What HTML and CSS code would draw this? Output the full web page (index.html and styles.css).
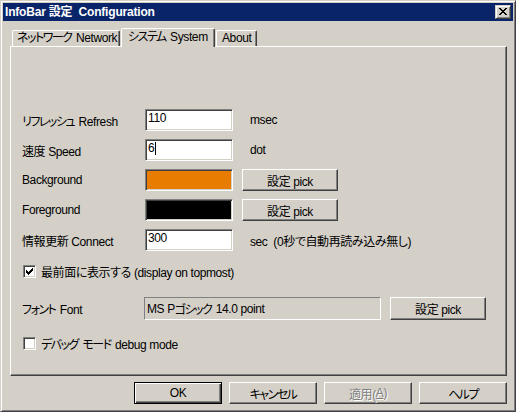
FILE: index.html
```html
<!DOCTYPE html>
<html lang="ja">
<head>
<meta charset="utf-8">
<title>InfoBar 設定 Configuration</title>
<link rel="stylesheet" href="styles.css">
</head>
<body>
<div class="window">
  <div class="titlebar">
    <span class="title">InfoBar 設定&nbsp; Configuration</span>
    <span class="close">
      <svg width="8" height="7" viewBox="0 0 8 7" shape-rendering="crispEdges"><path fill="#000" d="M0 0h2v1H0z M6 0h2v1H6z M1 1h2v1H1z M5 1h2v1H5z M2 2h4v1H2z M3 3h2v1H3z M2 4h4v1H2z M1 5h2v1H1z M5 5h2v1H5z M0 6h2v1H0z M6 6h2v1H6z"/></svg>
    </span>
  </div>
  <div class="body">
    <div class="tabs">
      <div class="tab tab-net"><span class="kn">ネットワーク</span> Network</div>
      <div class="tab tab-sys active"><span class="kn">システム</span> System</div>
      <div class="tab tab-about">About</div>
    </div>
    <div class="panel">
      <div class="form">
        <span class="label"><span class="kn">リフレッシュ</span> Refresh</span>
        <span class="edit">110</span>
        <span class="unit">msec</span>

        <span class="label">速度 Speed</span>
        <span class="edit">6<span class="caret"></span></span>
        <span class="unit">dot</span>

        <span class="label">Background</span>
        <span class="swatch swatch-orange"></span>
        <span class="btn pick">設定 pick</span>

        <span class="label">Foreground</span>
        <span class="swatch swatch-black"></span>
        <span class="btn pick">設定 pick</span>

        <span class="label">情報更新 Connect</span>
        <span class="edit">300</span>
        <span class="unit">sec&nbsp; (0秒で自動再読み込み無し)</span>
      </div>

      <div class="check-row topmost">
        <span class="checkbox">
          <svg width="7" height="7" viewBox="0 0 7 7" shape-rendering="crispEdges"><path fill="#000" d="M6 0h1v1H6z M5 1h2v1H5z M0 2h1v1H0z M4 2h3v1H4z M0 3h2v1H0z M3 3h3v1H3z M0 4h5v1H0z M1 5h3v1H1z M2 6h1v1H2z"/></svg>
        </span>
        <span class="check-label">最前面に表示する (display on topmost)</span>
      </div>

      <div class="font-row">
        <span class="font-label"><span class="kn">フォント</span> Font</span>
        <span class="static">MS P<span class="kn">ゴシック</span> 14.0 point</span>
        <span class="btn pick">設定 pick</span>
      </div>

      <div class="check-row debug">
        <span class="checkbox"></span>
        <span class="check-label"><span class="kn">デバッグ</span> <span class="kn">モード</span> debug mode</span>
      </div>
    </div>
    <div class="buttons">
      <span class="btn dlg default">OK</span>
      <span class="btn dlg"><span class="kn">キャンセル</span></span>
      <span class="btn dlg disabled">適用(<u>A</u>)</span>
      <span class="btn dlg"><span class="kn">ヘルプ</span></span>
    </div>
  </div>
</div>
</body>
</html>
```

FILE: styles.css
```css
html, body {
  margin: 0;
  padding: 0;
  background: #d4d0c8;
}

body {
  font-family: "Liberation Sans", "Noto Sans CJK JP", sans-serif;
  font-size: 12px;
  font-feature-settings: "palt";
  letter-spacing: -0.4px;
  color: #000;
}

.kn {
  letter-spacing: -1.5px;
  margin-right: 1.5px;
}

.dlg .kn {
  margin-right: 0;
}

.window {
  width: 516px;
  height: 412px;
  box-sizing: border-box;
  border: 1px solid;
  border-color: #d4d0c8 #404040 #404040 #d4d0c8;
  box-shadow: inset 1px 1px #fff, inset -1px -1px #808080;
  padding: 2px;
  display: flex;
  flex-direction: column;
  background: #d4d0c8;
}

.titlebar {
  height: 18px;
  background: #0a246a;
  display: flex;
  align-items: center;
  justify-content: space-between;
  padding: 0 2px 0 2px;
  flex: none;
}

.title {
  color: #fff;
  font-weight: bold;
  font-size: 12px;
  line-height: 18px;
  white-space: nowrap;
  letter-spacing: -0.2px;
}

.close {
  width: 16px;
  height: 14px;
  box-sizing: border-box;
  border: 1px solid;
  border-color: #d4d0c8 #404040 #404040 #d4d0c8;
  box-shadow: inset 1px 1px #fff, inset -1px -1px #808080;
  background: #d4d0c8;
  display: flex;
  align-items: center;
  justify-content: center;
  padding-bottom: 1px;
}

.close svg { display: block; }

.body {
  flex: 1;
  display: flex;
  flex-direction: column;
  padding: 7px 6px 5px 7px;
}

.tabs {
  display: flex;
  align-items: flex-end;
  height: 18px;
  padding-left: 2px;
  flex: none;
}

.tab {
  box-sizing: border-box;
  height: 16px;
  border-top: 1px solid #fff;
  border-left: 1px solid #fff;
  border-right: 1px solid #404040;
  border-radius: 2px 2px 0 0;
  box-shadow: inset -1px 0 #808080;
  padding-left: 4px;
  line-height: 15px;
  white-space: nowrap;
  overflow: hidden;
  background: #d4d0c8;
}

.tab-net { width: 108px; margin-right: 1px; }

.tab.active {
  width: 94px;
  height: 19px;
  margin-bottom: -1px;
  position: relative;
  z-index: 1;
  padding-left: 6px;
  line-height: 16px;
}

.tab-about { width: 41px; margin-left: 1px; padding-left: 5px; }

.panel {
  box-sizing: border-box;
  height: 330px;
  flex: none;
  border: 1px solid;
  border-color: #fff #404040 #404040 #fff;
  box-shadow: inset -1px -1px #808080;
  padding: 62px 0 0 11px;
  display: flex;
  flex-direction: column;
}

.form {
  display: grid;
  grid-template-columns: 123px 88px auto;
  grid-auto-rows: 22px;
  row-gap: 8px;
  align-items: center;
}

.label, .font-label, .unit, .check-label {
  white-space: nowrap;
}

.edit {
  box-sizing: border-box;
  height: 22px;
  background: #fff;
  border: 1px solid;
  border-color: #808080 #fff #fff #808080;
  box-shadow: inset 1px 1px #404040, inset -1px -1px #d4d0c8;
  padding: 1px 0 0 2px;
  line-height: 14px;
  display: flex;
  align-items: flex-start;
}

.caret {
  display: inline-block;
  width: 1px;
  height: 13px;
  background: #000;
  margin-left: 1px;
  margin-top: 1px;
}

.swatch {
  box-sizing: border-box;
  height: 22px;
  border: 1px solid;
  border-color: #808080 #fff #fff #808080;
  box-shadow: inset 1px 1px #404040, inset -1px -1px #d4d0c8;
}

.swatch-orange { background: #e87c00; }
.swatch-black { background: #000; }

.unit {
  padding-left: 17px;
}

.btn {
  box-sizing: border-box;
  display: flex;
  align-items: center;
  justify-content: center;
  border: 1px solid;
  border-color: #fff #404040 #404040 #fff;
  box-shadow: inset -1px -1px #808080;
  background: #d4d0c8;
  white-space: nowrap;
}

.pick {
  width: 96px;
  height: 22px;
  margin-left: 9px;
  justify-self: start;
}

.check-row {
  display: flex;
  align-items: center;
  height: 13px;
  padding-left: 1px;
}

.topmost { margin-top: 14px; }
.debug { margin-top: 17px; }

.checkbox {
  box-sizing: border-box;
  width: 13px;
  height: 13px;
  background: #fff;
  border: 1px solid;
  border-color: #808080 #fff #fff #808080;
  box-shadow: inset 1px 1px #404040, inset -1px -1px #d4d0c8;
  display: flex;
  align-items: center;
  justify-content: center;
  flex: none;
}

.checkbox svg { display: block; }

.check-label {
  margin-left: 5px;
}

.font-row {
  display: flex;
  align-items: center;
  height: 23px;
  margin-top: 19px;
}

.font-label {
  width: 122px;
}

.static {
  box-sizing: border-box;
  width: 237px;
  height: 23px;
  border: 1px solid;
  border-color: #808080 #fff #fff #808080;
  padding-left: 2px;
  display: flex;
  align-items: center;
  white-space: pre;
}

.font-row .pick {
  height: 23px;
}

.buttons {
  display: flex;
  justify-content: flex-end;
  gap: 7px;
  margin-top: 6px;
  padding-right: 0;
}

.dlg {
  width: 88px;
  height: 22px;
}

.default {
  border-color: #000;
  box-shadow: inset 1px 1px #fff, inset -1px -1px #404040, inset -2px -2px #808080;
}

.disabled {
  color: #808080;
  text-shadow: 1px 1px #fff;
}

.disabled u {
  text-decoration: underline;
}
```
